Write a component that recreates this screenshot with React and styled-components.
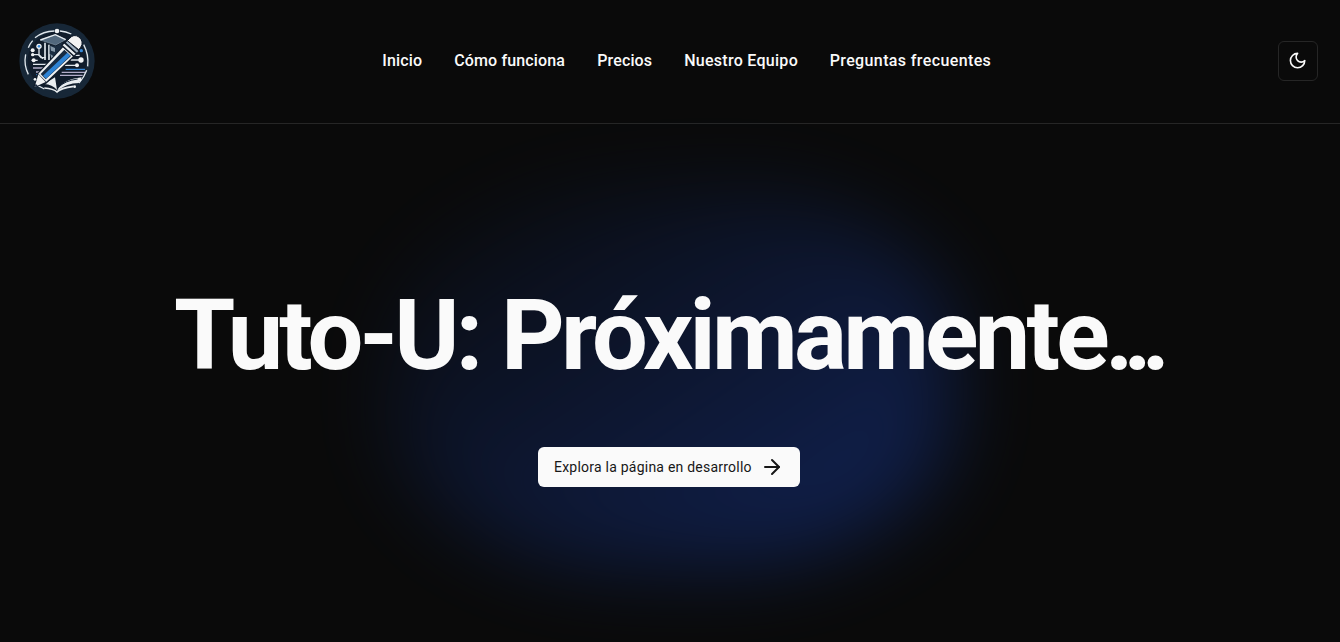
import React from 'react';
import styled, { createGlobalStyle } from 'styled-components';
import { ArrowRight } from 'lucide-react';

const GlobalStyle = createGlobalStyle`
  *, *::before, *::after { box-sizing: border-box; }
  body {
    margin: 0;
    background: #0a0a0a;
    color: #fafafa;
    font-family: Roboto, "Liberation Sans", sans-serif;
    overflow: hidden;
  }
`;

const Page = styled.div`
  display: flex;
  flex-direction: column;
  height: 100vh;
`;

const Header = styled.header`
  display: flex;
  justify-content: space-between;
  align-items: center;
  height: 124px;
  padding: 0 22px 2px 19.4px;
  border-bottom: 1px solid #262626;
`;

const Logo = styled.svg`
  display: block;
  width: 76px;
  height: 76px;
`;

const Nav = styled.nav`
  display: flex;
  gap: 32px;
`;

const NavLink = styled.a`
  width: ${(p) => p.$width}px;
  color: #fafafa;
  font-size: 16px;
  font-weight: 500;
  line-height: 24px;
  letter-spacing: ${(p) => p.$tracking}px;
  white-space: nowrap;
  text-decoration: none;
`;

const ThemeButton = styled.button`
  display: flex;
  align-items: center;
  justify-content: center;
  width: 40px;
  height: 40px;
  padding: 0;
  border: 1px solid #262626;
  border-radius: 6px;
  background: #0a0a0a;
  color: #fafafa;
`;

const Hero = styled.main`
  position: relative;
  z-index: 0;
  flex: 1;
  display: flex;
  flex-direction: column;
  align-items: center;
  padding-top: 151px;

  &::before {
    content: "";
    position: absolute;
    z-index: -1;
    top: 62px;
    left: 50%;
    width: 568px;
    height: 382px;
    transform: translateX(-50%);
    border-radius: 42%;
    background: linear-gradient(to bottom right, transparent, #1d4ed8);
    filter: blur(40px);
    opacity: 0.38;
  }
`;

const Title = styled.h1`
  display: flex;
  align-items: baseline;
  width: 990px;
  margin: 0 2px 0 0;
  font-size: 99px;
  font-weight: 700;
  line-height: 120px;
  white-space: nowrap;
`;

const TitlePart = styled.span`
  width: ${(p) => p.$width}px;
  letter-spacing: ${(p) => p.$tracking}px;
`;

const ExploreButton = styled.a`
  display: flex;
  align-items: center;
  gap: 8px;
  width: 262px;
  height: 40px;
  margin: 52px 2px 0 0;
  padding: 0 16px;
  border-radius: 6px;
  background: #fafafa;
  color: #171717;
  font-size: 14px;
  font-weight: 400;
  letter-spacing: 0.23px;
  white-space: nowrap;
`;

const links = [
  { label: 'Inicio', width: 40, tracking: 0.17 },
  { label: 'Cómo funciona', width: 111, tracking: 0.15 },
  { label: 'Precios', width: 55, tracking: 0.14 },
  { label: 'Nuestro Equipo', width: 113.5, tracking: 0.28 },
  { label: 'Preguntas frecuentes', width: 161.5, tracking: 0.38 },
];

function BrandLogo() {
  return (
    <Logo viewBox="28 33 228 228" fill="none">
      <circle cx="142" cy="147" r="113" fill="#172737" />
      <circle cx="142" cy="147" r="88" fill="#101c2b" />
      <g stroke="#dfe6ec" strokeWidth="4">
        <path d="M56 187a94 94 0 0 1-8-60M56 107q5-12 13-21M76 77q25-19 58-20M151 57q18 1 34 9M222 98q16 30 12 65M231 175q-8 22-23 38M104 231q-12-5-25-15" />
        <path d="M66 128h20l8 9h14M66 145h18M70 157h46M183 144h25M190 130h20M165 160h38" />
        <path d="M88 104v24l12 12" />
      </g>
      <path d="M92 84l45-16 31 15-30 16z" fill="#52687d" stroke="#8496a6" strokeWidth="2" />
      <path d="M92 84l45-16 31 15" stroke="#e6ecf0" strokeWidth="4" />
      <path d="M106 92v52M118 98v46" stroke="#dfe6ec" strokeWidth="5" />
      <path d="M120 100l20 2 18-12v26l-22 22-16-12z" fill="#1b2d41" />
      <path d="M122 102l14 6v12l-12-4zM122 126l14 10-10 8z" fill="#8496a6" />
      <path d="M70 168h36M79 180h30M156 181h70M151 190h68" stroke="#b3adca" strokeWidth="4" />
      <path d="M80 188h22M168 172h58" stroke="#3689d8" strokeWidth="4" />
      <path d="M142 236q18-34 74-40l-9 17q-35 1-65 23zM104 216l32-20 6 38q-14-16-38-18z" fill="#e9edf0" />
      <path d="M146 226q20-20 58-25" stroke="#16273a" strokeWidth="3" />
      <path d="M104 228q28 2 38 12 10-12 50-17" stroke="#e9edf0" strokeWidth="5" />
      <path d="M160 101l35 32-85 82-40 12 14-45z" fill="#101c2b" />
      <path d="M160 106l30 27-80 76-24-24z" fill="#f0f2f3" />
      <path d="M164 113l20 19-76 70-15-16z" fill="#172b42" />
      <path d="M173 122l9 9-73 69-9-9z" fill="#2e83d4" />
      <path d="M86 187l22 23-33 15z" fill="#f0f2f3" />
      <path d="M78 215l6 6-9 4z" fill="#14243a" />
      <path d="M164 92l37 33-8 8-37-33z" fill="#e9edf0" stroke="#101c2b" strokeWidth="4" />
      <path d="M173 84l36 33-7 8-36-33z" fill="#9fb0c0" stroke="#101c2b" strokeWidth="4" />
      <path d="M179 80q13-16 29-5 16 14 5 31l-6 7-34-27z" fill="#f3f3f3" stroke="#101c2b" strokeWidth="3" />
      <g fill="#f1f3f5">
        <circle cx="142" cy="57" r="7" />
        <circle cx="88" cy="103" r="8" />
        <circle cx="69" cy="115" r="6" />
        <circle cx="69" cy="128" r="5" />
        <circle cx="72" cy="145" r="6" />
        <circle cx="214" cy="144" r="8" />
        <circle cx="202" cy="160" r="6" />
        <circle cx="76" cy="202" r="4" />
        <circle cx="211" cy="204" r="4" />
        <circle cx="195" cy="224" r="4" />
      </g>
      <circle cx="88" cy="103" r="4" fill="#3689d8" />
      <circle cx="215" cy="116" r="5" fill="#3689d8" />
    </Logo>
  );
}

const Moon = styled.svg`
  display: block;
  width: 19.2px;
  height: 19.2px;
  fill: none;
  stroke: currentColor;
  stroke-width: 2;
  stroke-linecap: round;
  stroke-linejoin: round;
`;

export default function App() {
  return (
    <>
      <GlobalStyle />
      <Page>
        <Header>
          <BrandLogo />
          <Nav>
            {links.map((l) => (
              <NavLink key={l.label} $width={l.width} $tracking={l.tracking}>{l.label}</NavLink>
            ))}
          </Nav>
          <ThemeButton aria-label="Tema">
            <Moon viewBox="0 0 24 24">
              <path d="M12 3a6 6 0 0 0 9 9 9 9 0 1 1-9-9Z" />
            </Moon>
          </ThemeButton>
        </Header>
        <Hero>
          <Title>
            <TitlePart $width={327} $tracking={-4}>Tuto-U: </TitlePart>
            <TitlePart $width={604} $tracking={-3.8}>Próximamente</TitlePart>
            <TitlePart $tracking={-10.5}>...</TitlePart>
          </Title>
          <ExploreButton>
            Explora la página en desarrollo
            <ArrowRight size={24} strokeWidth={2} />
          </ExploreButton>
        </Hero>
      </Page>
    </>
  );
}
